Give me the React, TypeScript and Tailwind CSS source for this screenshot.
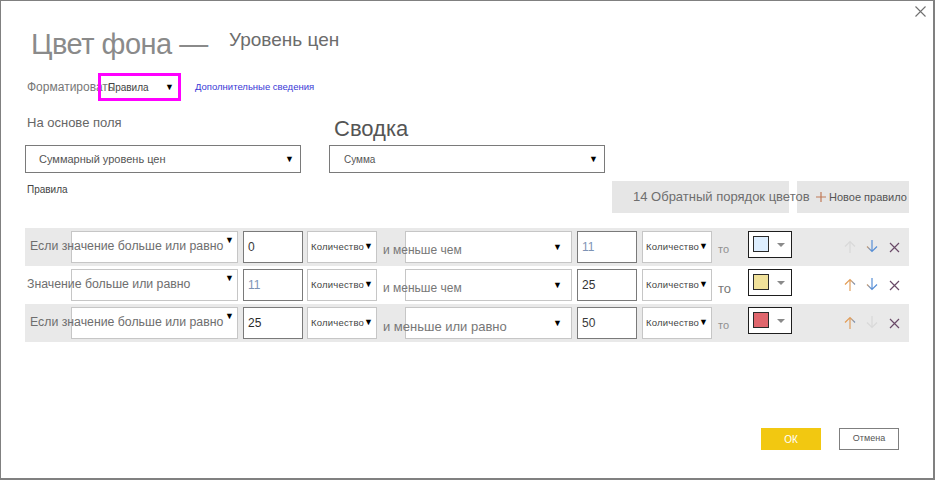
import React from "react";

const font = { fontFamily: '"Liberation Sans", Arial, sans-serif' };

type Rule = {
  label: string;
  labelPad: string;
  from: string;
  fromColor: string;
  mid: string;
  midSize: string;
  to: string;
  toColor: string;
  toSize: string;
  toColorText: string;
  swatch: string;
  upOn: boolean;
  downOn: boolean;
  shaded: boolean;
};

const rules: Rule[] = [
  {
    label: "Если значение больше или равно",
    labelPad: "pl-[5px]",
    from: "0",
    fromColor: "text-[#3a3a3a]",
    mid: "и меньше чем",
    midSize: "text-[12px]",
    to: "11",
    toColor: "text-[#7d93b5]",
    toSize: "text-[11px]",
    toColorText: "text-[#909090]",
    swatch: "bg-[#ddeeff]",
    upOn: false,
    downOn: true,
    shaded: true,
  },
  {
    label: "Значение больше или равно",
    labelPad: "pl-[2px]",
    from: "11",
    fromColor: "text-[#7d93b5]",
    mid: "и меньше чем",
    midSize: "text-[12px]",
    to: "25",
    toColor: "text-[#333]",
    toSize: "text-[13px]",
    toColorText: "text-[#777]",
    swatch: "bg-[#f0e19a]",
    upOn: true,
    downOn: true,
    shaded: false,
  },
  {
    label: "Если значение больше или равно",
    labelPad: "pl-[5px]",
    from: "25",
    fromColor: "text-[#2a2a2a]",
    mid: "и меньше или равно",
    midSize: "text-[13px]",
    to: "50",
    toColor: "text-[#3a3a3a]",
    toSize: "text-[11px]",
    toColorText: "text-[#909090]",
    swatch: "bg-[#e0666d]",
    upOn: true,
    downOn: false,
    shaded: true,
  },
];

function Arrow({ dir, on, id }: { dir: "up" | "down"; on: boolean; id: string }) {
  const d = dir === "up" ? "M6 1.5V13M1 6.5L6 1.5L11 6.5" : "M6 0V11.5M1 6.5L6 11.5L11 6.5";
  const split = dir === "up" ? "0.55" : "0.42";
  return (
    <svg width="12" height="13" viewBox="0 0 12 13" fill="none">
      <defs>
        <linearGradient id={id} x1="0" y1="0" x2="12" y2="0" gradientUnits="userSpaceOnUse">
          <stop offset="0" stopColor="#e49a4e" />
          <stop offset={split} stopColor={dir === "up" ? "#e0a060" : "#5a90d6"} />
          <stop offset="1" stopColor="#4f8bd6" />
        </linearGradient>
      </defs>
      <path d={d} stroke={on ? `url(#${id})` : "#d9d9d9"} strokeWidth="1.2" />
    </svg>
  );
}

function Caret({ className = "" }: { className?: string }) {
  return <span className={`text-[9px] leading-none text-black ${className}`}>▼</span>;
}

function Qty() {
  return (
    <div className="mt-[3px] flex h-[32px] w-[70px] shrink-0 items-center border border-[#c6c6c6] bg-white pl-[3px]">
      <span className="text-[9.5px] tracking-[0.2px] text-[#444]">Количество</span>
      <Caret className="mb-[2px] text-[8px]" />
    </div>
  );
}

function RuleRow({ r, i }: { r: Rule; i: number }) {
  return (
    <div className={`flex h-[38px] items-start ${r.shaded ? "bg-[#e9e9e9]" : "bg-white"}`}>
      <div className={`relative z-10 mt-[12px] w-[46px] shrink-0 whitespace-nowrap text-[12.3px] leading-none text-[#6e6e6e] ${r.labelPad}`}>
        {r.label}
      </div>
      <div className="mt-[3px] flex h-[32px] w-[167px] shrink-0 items-start justify-end border border-[#c6c6c6] bg-white pr-[3px] pt-[4px]">
        <Caret />
      </div>
      <div className="ml-[5px] mt-[3px] flex h-[32px] w-[60px] shrink-0 items-center border border-[#7a7a7a] bg-white pl-[4px]">
        <span className={`text-[12px] ${r.fromColor}`}>{r.from}</span>
      </div>
      <div className="ml-[4px]">
        <Qty />
      </div>
      <div className={`relative z-10 mt-[16px] w-[28px] shrink-0 whitespace-nowrap pl-[6px] leading-none text-[#777] ${r.midSize}`}>
        {r.mid}
      </div>
      <div className="mt-[3px] flex h-[32px] w-[167px] shrink-0 items-center justify-end border border-[#c6c6c6] bg-white pr-[9px]">
        <Caret />
      </div>
      <div className="ml-[5px] mt-[3px] flex h-[32px] w-[60px] shrink-0 items-center border border-[#7a7a7a] bg-white pl-[4px]">
        <span className={`text-[12px] ${r.toColor}`}>{r.to}</span>
      </div>
      <div className="ml-[5px]">
        <Qty />
      </div>
      <div className={`mt-[16px] w-[36px] shrink-0 pl-[6px] leading-none ${r.toSize} ${r.toColorText}`}>то</div>
      <div className="mt-[3px] flex h-[27px] w-[44px] shrink-0 items-start border border-[#1e1e1e] bg-white pl-[4px] pt-[4px]">
        <div className={`h-[16px] w-[16px] border border-[#2a2a2a] ${r.swatch}`} />
        <div className="ml-[8px] mt-[7px] h-0 w-0 border-x-[4px] border-t-[4px] border-x-transparent border-t-[#8a8a8a]" />
      </div>
      <div className="ml-[52px] mt-[12px] flex items-start gap-[10px]">
        <Arrow dir="up" on={r.upOn} id={`up${i}`} />
        <Arrow dir="down" on={r.downOn} id={`dn${i}`} />
        <svg className="ml-[1px] mt-[2px]" width="11" height="11" viewBox="0 0 11 11" fill="none">
          <path d="M1 1L10 10M10 1L1 10" stroke="#6a4a68" strokeWidth="1.2" />
        </svg>
      </div>
    </div>
  );
}

export default function App() {
  return (
    <div
      className="flex h-[480px] w-[935px] flex-col border-b-2 border-l border-r-2 border-t border-[#808080] bg-white px-[24px]"
      style={font}
    >
      {/* верхняя полоса с крестиком */}
      <div className="-mr-[17px] flex h-[28px] justify-end pt-[5px]">
        <svg width="11" height="11" viewBox="0 0 11 11" fill="none">
          <path d="M0.5 0.5L10.5 10.5M10.5 0.5L0.5 10.5" stroke="#707070" strokeWidth="1.1" />
        </svg>
      </div>

      <div className="flex items-start">
        <div className="mt-[1px] w-[204px] shrink-0 whitespace-nowrap pl-[6px] text-[29px] leading-none tracking-[-0.5px] text-[#8a8a8a]">
          Цвет фона —
        </div>
        <div className="mt-[1px] text-[19px] leading-none text-[#6c6c6c]">Уровень цен</div>
      </div>

      <div className="mt-[14px] flex h-[28px] items-center">
        <div className="w-[73px] shrink-0 whitespace-nowrap pl-[2px] text-[12px] text-[#777]">Форматировать</div>
        <div className="flex h-[28px] w-[83px] shrink-0 items-center justify-between border-[3px] border-[#ff00ff] pl-[7px] pr-[4px]">
          <span className="text-[10px] text-[#444]">Правила</span>
          <Caret />
        </div>
        <a className="ml-[14px] text-[9.5px] text-[#3a3ad6]">Дополнительные сведения</a>
      </div>

      <div className="mt-[15px] flex items-end gap-[28px]">
        <div className="flex w-[276px] flex-col">
          <div className="mb-[16px] pl-[2px] text-[13px] leading-none text-[#666]">На основе поля</div>
          <div className="flex h-[28px] items-center justify-between border border-[#7a7a7a] pl-[13px] pr-[6px]">
            <span className="text-[11px] text-[#555]">Суммарный уровень цен</span>
            <Caret />
          </div>
        </div>
        <div className="flex w-[276px] flex-col">
          <div className="mb-[5px] pl-[5px] text-[22px] leading-none text-[#555]">Сводка</div>
          <div className="flex h-[28px] items-center justify-between border border-[#7a7a7a] pl-[14px] pr-[6px]">
            <span className="text-[10px] text-[#555]">Сумма</span>
            <Caret />
          </div>
        </div>
      </div>

      <div className="mt-[8px] flex items-start justify-between">
        <div className="mt-[4px] pl-[2px] text-[10px] leading-none text-[#444]">Правила</div>
        <div className="flex gap-[8px]">
          <div className="flex h-[32px] w-[177px] items-center bg-[#e6e6e6] pl-[21px]">
            <span className="relative z-10 whitespace-nowrap text-[13px] text-[#6e6e6e]">14 Обратный порядок цветов</span>
          </div>
          <div className="flex h-[32px] w-[112px] items-center bg-[#e6e6e6] pl-[19px]">
            <svg width="10" height="10" viewBox="0 0 10 10" fill="none">
              <path d="M5 0V10M0 5H10" stroke="#c07a58" strokeWidth="1.2" />
            </svg>
            <span className="ml-[3px] whitespace-nowrap text-[11px] text-[#555]">Новое правило</span>
          </div>
        </div>
      </div>

      <div className="mt-[15px] flex flex-col">
        {rules.map((r, i) => (
          <RuleRow key={i} r={r} i={i} />
        ))}
      </div>

      <div className="mr-[10px] mt-[86px] flex justify-end">
        <button className="flex h-[22px] w-[60px] items-center justify-center bg-[#f2c811] text-[10px] text-white">
          ОК
        </button>
        <button className="ml-[18px] flex h-[22px] w-[60px] items-center justify-center border border-[#7f7f7f] text-[9px] text-[#555]">
          Отмена
        </button>
      </div>
    </div>
  );
}
